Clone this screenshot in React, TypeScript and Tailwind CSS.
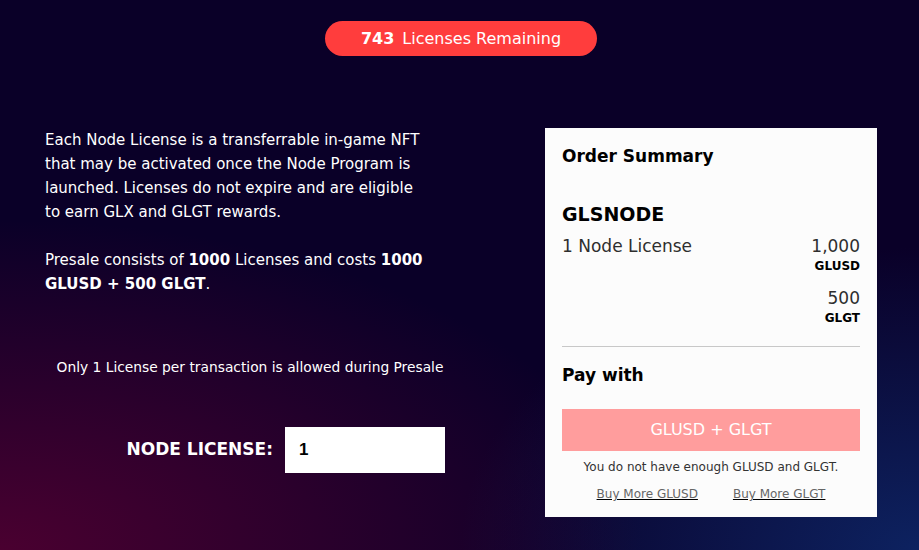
import React, { useState } from 'react';

const font = { fontFamily: '"DejaVu Sans", "Open Sans", sans-serif' };

const PriceLine: React.FC<{ amount: string; token: string }> = ({ amount, token }) => (
  <div className="text-right">
    <p className="text-[17px] leading-[22px] font-normal text-[#2e2e2e]">{amount}</p>
    <p className="text-[12px] leading-[16px] mt-[1px] font-bold text-black">{token}</p>
  </div>
);

const OrderSummary: React.FC = () => (
  <div className="w-[332px] h-[389px] bg-[#fcfcfc] px-[17px] pt-[16px] shrink-0">
    <h3 className="text-[17px] leading-[24px] font-bold text-black">Order Summary</h3>
    <h4 className="mt-[33px] text-[19px] leading-[26px] font-bold text-black">GLSNODE</h4>
    <div className="mt-[8px] flex justify-between items-start">
      <p className="text-[17px] leading-[22px] font-normal text-[#2e2e2e]">1 Node License</p>
      <div className="space-y-[13px]">
        <PriceLine amount="1,000" token="GLUSD" />
        <PriceLine amount="500" token="GLGT" />
      </div>
    </div>
    <div className="mt-[20px] border-t border-[#c8c8c8]" />
    <h3 className="mt-[16px] text-[17px] leading-[24px] font-bold text-black">Pay with</h3>
    <button
      disabled
      className="mt-[22px] w-full h-[42px] bg-[#ff9d9d] text-white text-[16px] font-normal"
    >
      GLUSD + GLGT
    </button>
    <p className="mt-[8px] text-center text-[12px] leading-[16px] text-[#333]">
      You do not have enough GLUSD and GLGT.
    </p>
    <div className="mt-[11px] flex justify-center gap-[35px] text-[12px] leading-[16px] text-[#666]">
      <a className="underline decoration-black">Buy More GLUSD</a>
      <a className="underline decoration-black">Buy More GLGT</a>
    </div>
  </div>
);

export default function App() {
  const [qty, setQty] = useState('1');
  return (
    <div
      style={font}
      className="w-[919px] h-[550px] overflow-hidden text-white bg-[#0a0028] bg-[radial-gradient(ellipse_70%_60%_at_0%_100%,#4a0030_0%,rgba(10,0,40,0)_100%),radial-gradient(ellipse_50%_55%_at_100%_100%,#0d2260_0%,rgba(10,0,40,0)_100%)]"
    >
      <div className="flex justify-center pt-[21px] pl-[3px]">
        <div className="h-[35px] w-[272px] rounded-full bg-[#ff3d3d] flex items-center justify-center gap-[8px] text-[16px]">
          <span className="font-bold">743</span>
          <span>Licenses Remaining</span>
        </div>
      </div>

      <div className="flex justify-between pl-[45px] pr-[42px] pt-[72px]">
        <div className="w-[400px]">
          <p className="text-[15px] leading-[24px]">
            Each Node License is a transferrable in-game NFT that may be activated once the Node Program is
            launched. Licenses do not expire and are eligible
            <br />
            to earn GLX and GLGT rewards.
          </p>
          <p className="mt-[24px] text-[15px] leading-[24px]">
            Presale consists of <span className="font-bold">1000</span> Licenses and costs{' '}
            <span className="font-bold">1000 GLUSD + 500 GLGT</span>.
          </p>
          <p className="mt-[61px] pl-[10px] text-center text-[13.8px] leading-[20px] whitespace-nowrap">
            Only 1 License per transaction is allowed during Presale
          </p>
          <div className="mt-[50px] flex items-center justify-end gap-[12px]">
            <span className="text-[17px] font-bold">NODE LICENSE:</span>
            <input
              value={qty}
              onChange={(e) => setQty(e.target.value)}
              className="w-[160px] h-[46px] bg-white text-black pl-[14px] text-[17px] font-bold outline-none"
              style={{ fontFamily: '"Liberation Sans", Arial, sans-serif' }}
            />
          </div>
        </div>
        <OrderSummary />
      </div>
    </div>
  );
}
